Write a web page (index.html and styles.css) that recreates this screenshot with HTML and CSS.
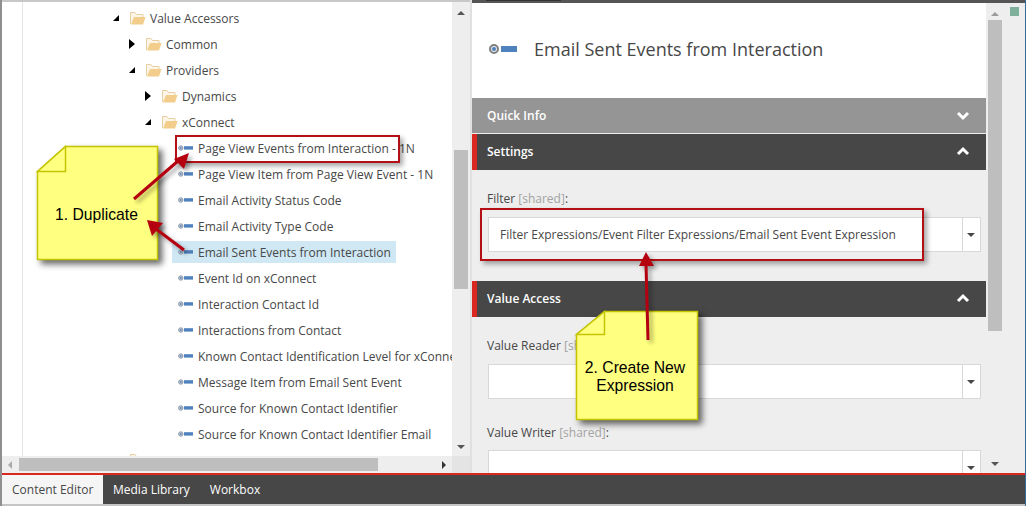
FILE: index.html
```html
<!DOCTYPE html>
<html lang="en">
<head>
  <meta charset="UTF-8">
  <title>Content Editor</title>
  <link rel="stylesheet" href="styles.css">
</head>
<body>

  <div class="app">
    <div class="main">

      <!-- Content tree -->
      <div class="tree-pane">
        <div class="tree-body">
          <div class="tree">
            <div class="row depth-0"><i class="exp open"></i><svg class="folder" viewBox="0 0 16 16"><use href="#folder"/></svg><span>Value Accessors</span></div>
            <div class="row depth-1"><i class="exp closed"></i><svg class="folder" viewBox="0 0 16 16"><use href="#folder"/></svg><span>Common</span></div>
            <div class="row depth-1"><i class="exp open"></i><svg class="folder" viewBox="0 0 16 16"><use href="#folder"/></svg><span>Providers</span></div>
            <div class="row depth-2"><i class="exp closed"></i><svg class="folder" viewBox="0 0 16 16"><use href="#folder"/></svg><span>Dynamics</span></div>
            <div class="row depth-2"><i class="exp open"></i><svg class="folder" viewBox="0 0 16 16"><use href="#folder"/></svg><span>xConnect</span></div>
            <div class="row leaf"><div class="item"><svg class="node" viewBox="0 0 15 6"><use href="#node"/></svg><span>Page View Events from Interaction - 1N</span></div></div>
            <div class="row leaf"><div class="item"><svg class="node" viewBox="0 0 15 6"><use href="#node"/></svg><span>Page View Item from Page View Event - 1N</span></div></div>
            <div class="row leaf"><div class="item"><svg class="node" viewBox="0 0 15 6"><use href="#node"/></svg><span>Email Activity Status Code</span></div></div>
            <div class="row leaf"><div class="item"><svg class="node" viewBox="0 0 15 6"><use href="#node"/></svg><span>Email Activity Type Code</span></div></div>
            <div class="row leaf"><div class="item selected"><svg class="node" viewBox="0 0 15 6"><use href="#node"/></svg><span>Email Sent Events from Interaction</span></div></div>
            <div class="row leaf"><div class="item"><svg class="node" viewBox="0 0 15 6"><use href="#node"/></svg><span>Event Id on xConnect</span></div></div>
            <div class="row leaf"><div class="item"><svg class="node" viewBox="0 0 15 6"><use href="#node"/></svg><span>Interaction Contact Id</span></div></div>
            <div class="row leaf"><div class="item"><svg class="node" viewBox="0 0 15 6"><use href="#node"/></svg><span>Interactions from Contact</span></div></div>
            <div class="row leaf"><div class="item"><svg class="node" viewBox="0 0 15 6"><use href="#node"/></svg><span>Known Contact Identification Level for xConnect</span></div></div>
            <div class="row leaf"><div class="item"><svg class="node" viewBox="0 0 15 6"><use href="#node"/></svg><span>Message Item from Email Sent Event</span></div></div>
            <div class="row leaf"><div class="item"><svg class="node" viewBox="0 0 15 6"><use href="#node"/></svg><span>Source for Known Contact Identifier</span></div></div>
            <div class="row leaf"><div class="item"><svg class="node" viewBox="0 0 15 6"><use href="#node"/></svg><span>Source for Known Contact Identifier Email</span></div></div>
            <div class="row depth-0"><i class="exp"></i><svg class="folder" viewBox="0 0 16 16"><use href="#folder"/></svg></div>
          </div>
          <div class="vscroll tree-vscroll">
            <i class="tri up"></i>
            <div class="thumb"></div>
            <i class="tri down"></i>
          </div>
        </div>
        <div class="hscroll">
          <i class="tri left"></i>
          <div class="hthumb"></div>
          <i class="tri right"></i>
          <div class="corner"></div>
        </div>
      </div>

      <!-- Item editor -->
      <div class="editor">
        <div class="editor-top"><div class="top-tab"></div></div>
        <div class="editor-body">
          <div class="content">
            <div class="title">
              <svg class="title-icon" viewBox="0 0 28 10"><circle cx="5" cy="5" r="4" fill="#e4e8ee" stroke="#808080" stroke-width="2"/><circle cx="5" cy="5" r="2" fill="#4f81bd"/><rect x="12" y="2" width="16" height="6" fill="#4f81bd"/></svg>
              <h1>Email Sent Events from Interaction</h1>
            </div>

            <div class="section section-closed"><span>Quick Info</span><svg class="chev" viewBox="0 0 14 10"><path d="M2 2l5 5 5-5"/></svg></div>
            <div class="section section-open"><span>Settings</span><svg class="chev" viewBox="0 0 14 10"><path d="M2 8l5-5 5 5"/></svg></div>
            <div class="fields">
              <label class="field-label">Filter <em>[shared]</em>:</label>
              <div class="select"><div class="select-text">Filter Expressions/Event Filter Expressions/Email Sent Event Expression</div><div class="select-btn"><i class="tri down"></i></div></div>
            </div>

            <div class="section section-open"><span>Value Access</span><svg class="chev" viewBox="0 0 14 10"><path d="M2 8l5-5 5 5"/></svg></div>
            <div class="fields">
              <label class="field-label">Value Reader <em>[shared]</em>:</label>
              <div class="select"><div class="select-text"></div><div class="select-btn"><i class="tri down"></i></div></div>
              <label class="field-label">Value Writer <em>[shared]</em>:</label>
              <div class="select"><div class="select-text"></div><div class="select-btn"><i class="tri down"></i></div></div>
            </div>
          </div>
          <div class="vscroll editor-vscroll">
            <i class="tri up"></i>
            <div class="thumb"></div>
            <i class="tri down"></i>
          </div>
          <div class="gutter"><div class="status"></div></div>
        </div>
      </div>
    </div>

    <!-- Bottom tabs -->
    <div class="tabs">
      <div class="tab active">Content Editor</div>
      <div class="tab">Media Library</div>
      <div class="tab">Workbox</div>
    </div>
    <div class="foot"></div>
  </div>

  <!-- Annotations drawn over the screenshot -->
  <div class="callout callout-1"></div>
  <div class="callout callout-2"></div>

  <div class="note note-1">
    <svg class="note-bg" viewBox="0 0 121 114"><path class="note-fill" d="M28.5 .5H120.5V113.5H.5V25.5Z"/><path class="note-fold" d="M28.5 .5V25.5H.5Z"/></svg>
    <span>1. Duplicate</span>
  </div>
  <div class="note note-2">
    <svg class="note-bg" viewBox="0 0 122 109"><path class="note-fill" d="M28.5 .5H121.5V108.5H.5V23.5Z"/><path class="note-fold" d="M28.5 .5V23.5H.5Z"/></svg>
    <span>2. Create New<br>Expression</span>
  </div>

  <svg class="arrows" viewBox="0 0 1026 506">
    <defs>
      <g id="folder"><path d="M.5 14V2.5H5L6.5 4.5H13V7" fill="#fdf6e8" stroke="#e6cfa0"/><path d="M1 14.5L4 7H15.5L13 14.5Z" fill="#f2cd8b"/></g>
      <g id="node"><circle cx="2.8" cy="3" r="2.2" fill="#c4cfdf" stroke="#8d97a5"/><circle cx="2.8" cy="3" r=".9" fill="#5f86b8"/><rect x="6" y="1.2" width="9" height="3.4" fill="#4f81bd"/></g>
    </defs>
    <g class="arrow">
      <path d="M134 199L178 161"/><path class="head" d="M189 153L174 159L184 169Z"/>
      <path d="M184 250L156 229"/><path class="head" d="M147 220L152 236L163 223Z"/>
      <path d="M648 340L646 264"/><path class="head" d="M646 252L639 266L654 266Z"/>
    </g>
  </svg>

</body>
</html>
```

FILE: styles.css
```css
/* Base */
* {
  margin: 0;
  padding: 0;
  box-sizing: border-box;
}

body {
  width: 1026px;
  height: 506px;
  overflow: hidden;
  position: relative;
  font-family: 'Open Sans', sans-serif;
  font-size: 12px;
  color: #474747;
  background-color: #fff;
}

.app {
  height: 506px;
  display: flex;
  flex-direction: column;
  border-left: 2px solid #8f8f8f;
  border-right: 1px solid #3a6a96;
}

.main {
  height: 473px;
  display: flex;
  flex: none;
}

/* Tree */
.tree-pane {
  width: 468px;
  display: flex;
  flex-direction: column;
  border-top: 2px solid #c8c8c8;
}

.tree-body {
  height: 454px;
  display: flex;
}

.tree {
  width: 450px;
  padding-left: 20px;
  overflow: hidden;
  white-space: nowrap;
}

.tree::before {
  content: '';
  position: absolute;
  left: 22px;
  top: 2px;
  height: 454px;
  width: 1px;
  background-color: #e6e6e6;
}

.row {
  height: 26px;
  display: flex;
  align-items: center;
  position: relative;
  top: 3px;
}

.depth-0 { padding-left: 91px; }
.depth-1 { padding-left: 107px; }
.depth-2 { padding-left: 123px; }
.leaf { padding-left: 150px; }

.exp {
  width: 17px;
  height: 10px;
  flex: none;
  position: relative;
}

.exp.closed::before {
  content: '';
  position: absolute;
  left: 0;
  top: 0;
  border-left: 6px solid #000;
  border-top: 5px solid transparent;
  border-bottom: 5px solid transparent;
}

.exp.open::before {
  content: '';
  position: absolute;
  left: 0;
  top: 2px;
  border-right: 6px solid #000;
  border-top: 6px solid transparent;
}

.folder {
  width: 16px;
  height: 16px;
  flex: none;
  margin-right: 4px;
}

.item {
  height: 22px;
  display: flex;
  align-items: center;
  padding: 0 5px 0 6px;
}

.item.selected {
  background-color: #cfe8f4;
}

.node {
  width: 15px;
  height: 6px;
  flex: none;
  margin-right: 5px;
}

/* Scrollbars */
.vscroll {
  width: 18px;
  flex: none;
  background-color: #eee;
  position: relative;
}

.thumb {
  position: absolute;
  left: 2px;
  width: 14px;
  background-color: #bebebe;
}

.tree-vscroll .thumb {
  top: 148px;
  height: 139px;
}

.editor-vscroll .thumb {
  top: 17px;
  height: 311px;
}

.tri {
  position: absolute;
  width: 0;
  height: 0;
}

.tri.up {
  left: 5px;
  top: 9px;
  border: 4px solid transparent;
  border-top: 0;
  border-bottom: 4px solid #555;
}

.editor-vscroll .tri.up {
  border-bottom-color: #9a9a9a;
}

.vscroll .tri.down {
  left: 5px;
  bottom: 7px;
  border: 4px solid transparent;
  border-bottom: 0;
  border-top: 4px solid #555;
}

.hscroll {
  height: 17px;
  display: flex;
  align-items: center;
  background-color: #eee;
  position: relative;
}

.hthumb {
  position: absolute;
  left: 17px;
  top: 2px;
  width: 359px;
  height: 13px;
  background-color: #bebebe;
}

.tri.left {
  left: 6px;
  top: 5px;
  border: 4px solid transparent;
  border-left: 0;
  border-right: 4px solid #aaa;
}

.tri.right {
  left: 440px;
  top: 5px;
  border: 4px solid transparent;
  border-right: 0;
  border-left: 4px solid #333;
}

.corner {
  position: absolute;
  right: 0;
  top: 0;
  width: 18px;
  height: 17px;
  background-color: #e4e4e4;
}

/* Editor */
.editor {
  width: 555px;
  display: flex;
  flex-direction: column;
  border-left: 2px solid #e0e0e0;
}

.editor-top {
  height: 3px;
  flex: none;
  background-color: #555;
}

.top-tab {
  width: 75px;
  height: 1px;
  margin-left: 14px;
  background-color: #333;
}

.editor-body {
  flex: 1;
  min-height: 0;
  display: flex;
}

.content {
  width: 514px;
  flex: none;
  overflow: hidden;
  background-color: #eee;
}

.title {
  height: 95px;
  display: flex;
  align-items: center;
  padding: 0 0 4px 17px;
  background-color: #fff;
}

.title-icon {
  width: 28px;
  height: 10px;
  margin-right: 17px;
}

h1 {
  font-size: 18px;
  font-weight: 400;
  color: #474747;
}

.section {
  height: 36px;
  display: flex;
  align-items: center;
  justify-content: space-between;
  padding: 0 16px 0 15px;
  color: #fff;
  font-weight: 600;
}

.section-closed {
  height: 35px;
  margin-bottom: 1px;
  background-color: #959595;
}

.section-open {
  background-color: #474747;
  border-left: 5px solid #d9281f;
  padding-left: 10px;
  padding-bottom: 2px;
}

.chev {
  width: 14px;
  height: 10px;
  fill: none;
  stroke: #fff;
  stroke-width: 3;
}

.fields {
  padding: 0 5px 25px 16px;
}

.field-label {
  display: block;
  height: 47px;
  padding-top: 20px;
  margin-left: -1px;
  color: #474747;
}

.select + .field-label {
  padding-top: 21px;
}

.field-label em {
  font-style: normal;
  color: #a3a3a3;
}

.select {
  height: 35px;
  display: flex;
  margin-bottom: 4px;
}

.select-text {
  flex: 1;
  padding-left: 11px;
  line-height: 33px;
  background-color: #fff;
  border: 1px solid #d8d8d8;
}

.select-btn {
  width: 18px;
  position: relative;
  background-color: #fff;
  border: 1px solid #d8d8d8;
  border-left: 0;
}

.select-btn .tri.down {
  left: 4px;
  top: 15px;
  border: 4px solid transparent;
  border-bottom: 0;
  border-top: 4px solid #474747;
}

.gutter {
  flex: 1;
  background-color: #eee;
  padding: 4px 0 0 6px;
}

.status {
  width: 9px;
  height: 9px;
  background-color: #7fb09c;
}

/* Bottom tabs */
.tabs {
  height: 31px;
  flex: none;
  display: flex;
  background-color: #474747;
  border-top: 2px solid #d9281f;
}

.tab {
  padding: 0 10px;
  line-height: 29px;
  color: #fff;
  font-size: 12px;
  white-space: nowrap;
}

.tab.active {
  width: 101px;
  background-color: #f5f5f5;
  color: #474747;
}

.foot {
  flex: 1;
  background-color: #c4c4c4;
}

/* Annotations */
.callout {
  position: absolute;
  border: 2px solid #b50f16;
  box-shadow: 3px 3px 5px rgba(0, 0, 0, 0.35);
}

.callout-1 {
  left: 175px;
  top: 135px;
  width: 225px;
  height: 28px;
}

.callout-2 {
  left: 480px;
  top: 208px;
  width: 444px;
  height: 53px;
}

.note {
  position: absolute;
  display: flex;
  align-items: center;
  justify-content: center;
  text-align: center;
  font-family: 'Liberation Sans', sans-serif;
  font-size: 15.7px;
  line-height: 18px;
  color: #000;
}

.note span {
  position: relative;
}

.note-bg {
  position: absolute;
  left: 0;
  top: 0;
  width: 100%;
  height: 100%;
  overflow: visible;
  filter: drop-shadow(4px 4px 3px rgba(0, 0, 0, 0.6));
}

.note-fill {
  fill: #ffff80;
  stroke: #c4c400;
  stroke-width: 1.5;
}

.note-fold {
  fill: #ffff80;
  stroke: #c4c400;
  stroke-width: 1.5;
}

.note-1 {
  left: 37px;
  top: 146px;
  width: 121px;
  height: 114px;
  padding: 24px 2px 0 0;
}

.note-2 {
  left: 576px;
  top: 311px;
  width: 122px;
  height: 109px;
  padding: 22px 4px 0 0;
}

.arrows {
  position: absolute;
  left: 0;
  top: 0;
  width: 1026px;
  height: 506px;
  pointer-events: none;
  filter: drop-shadow(3px 3px 2px rgba(0, 0, 0, 0.35));
}

.arrow path {
  fill: none;
  stroke: #b5000f;
  stroke-width: 3;
}

.arrow .head {
  fill: #b5000f;
  stroke: none;
}
```
